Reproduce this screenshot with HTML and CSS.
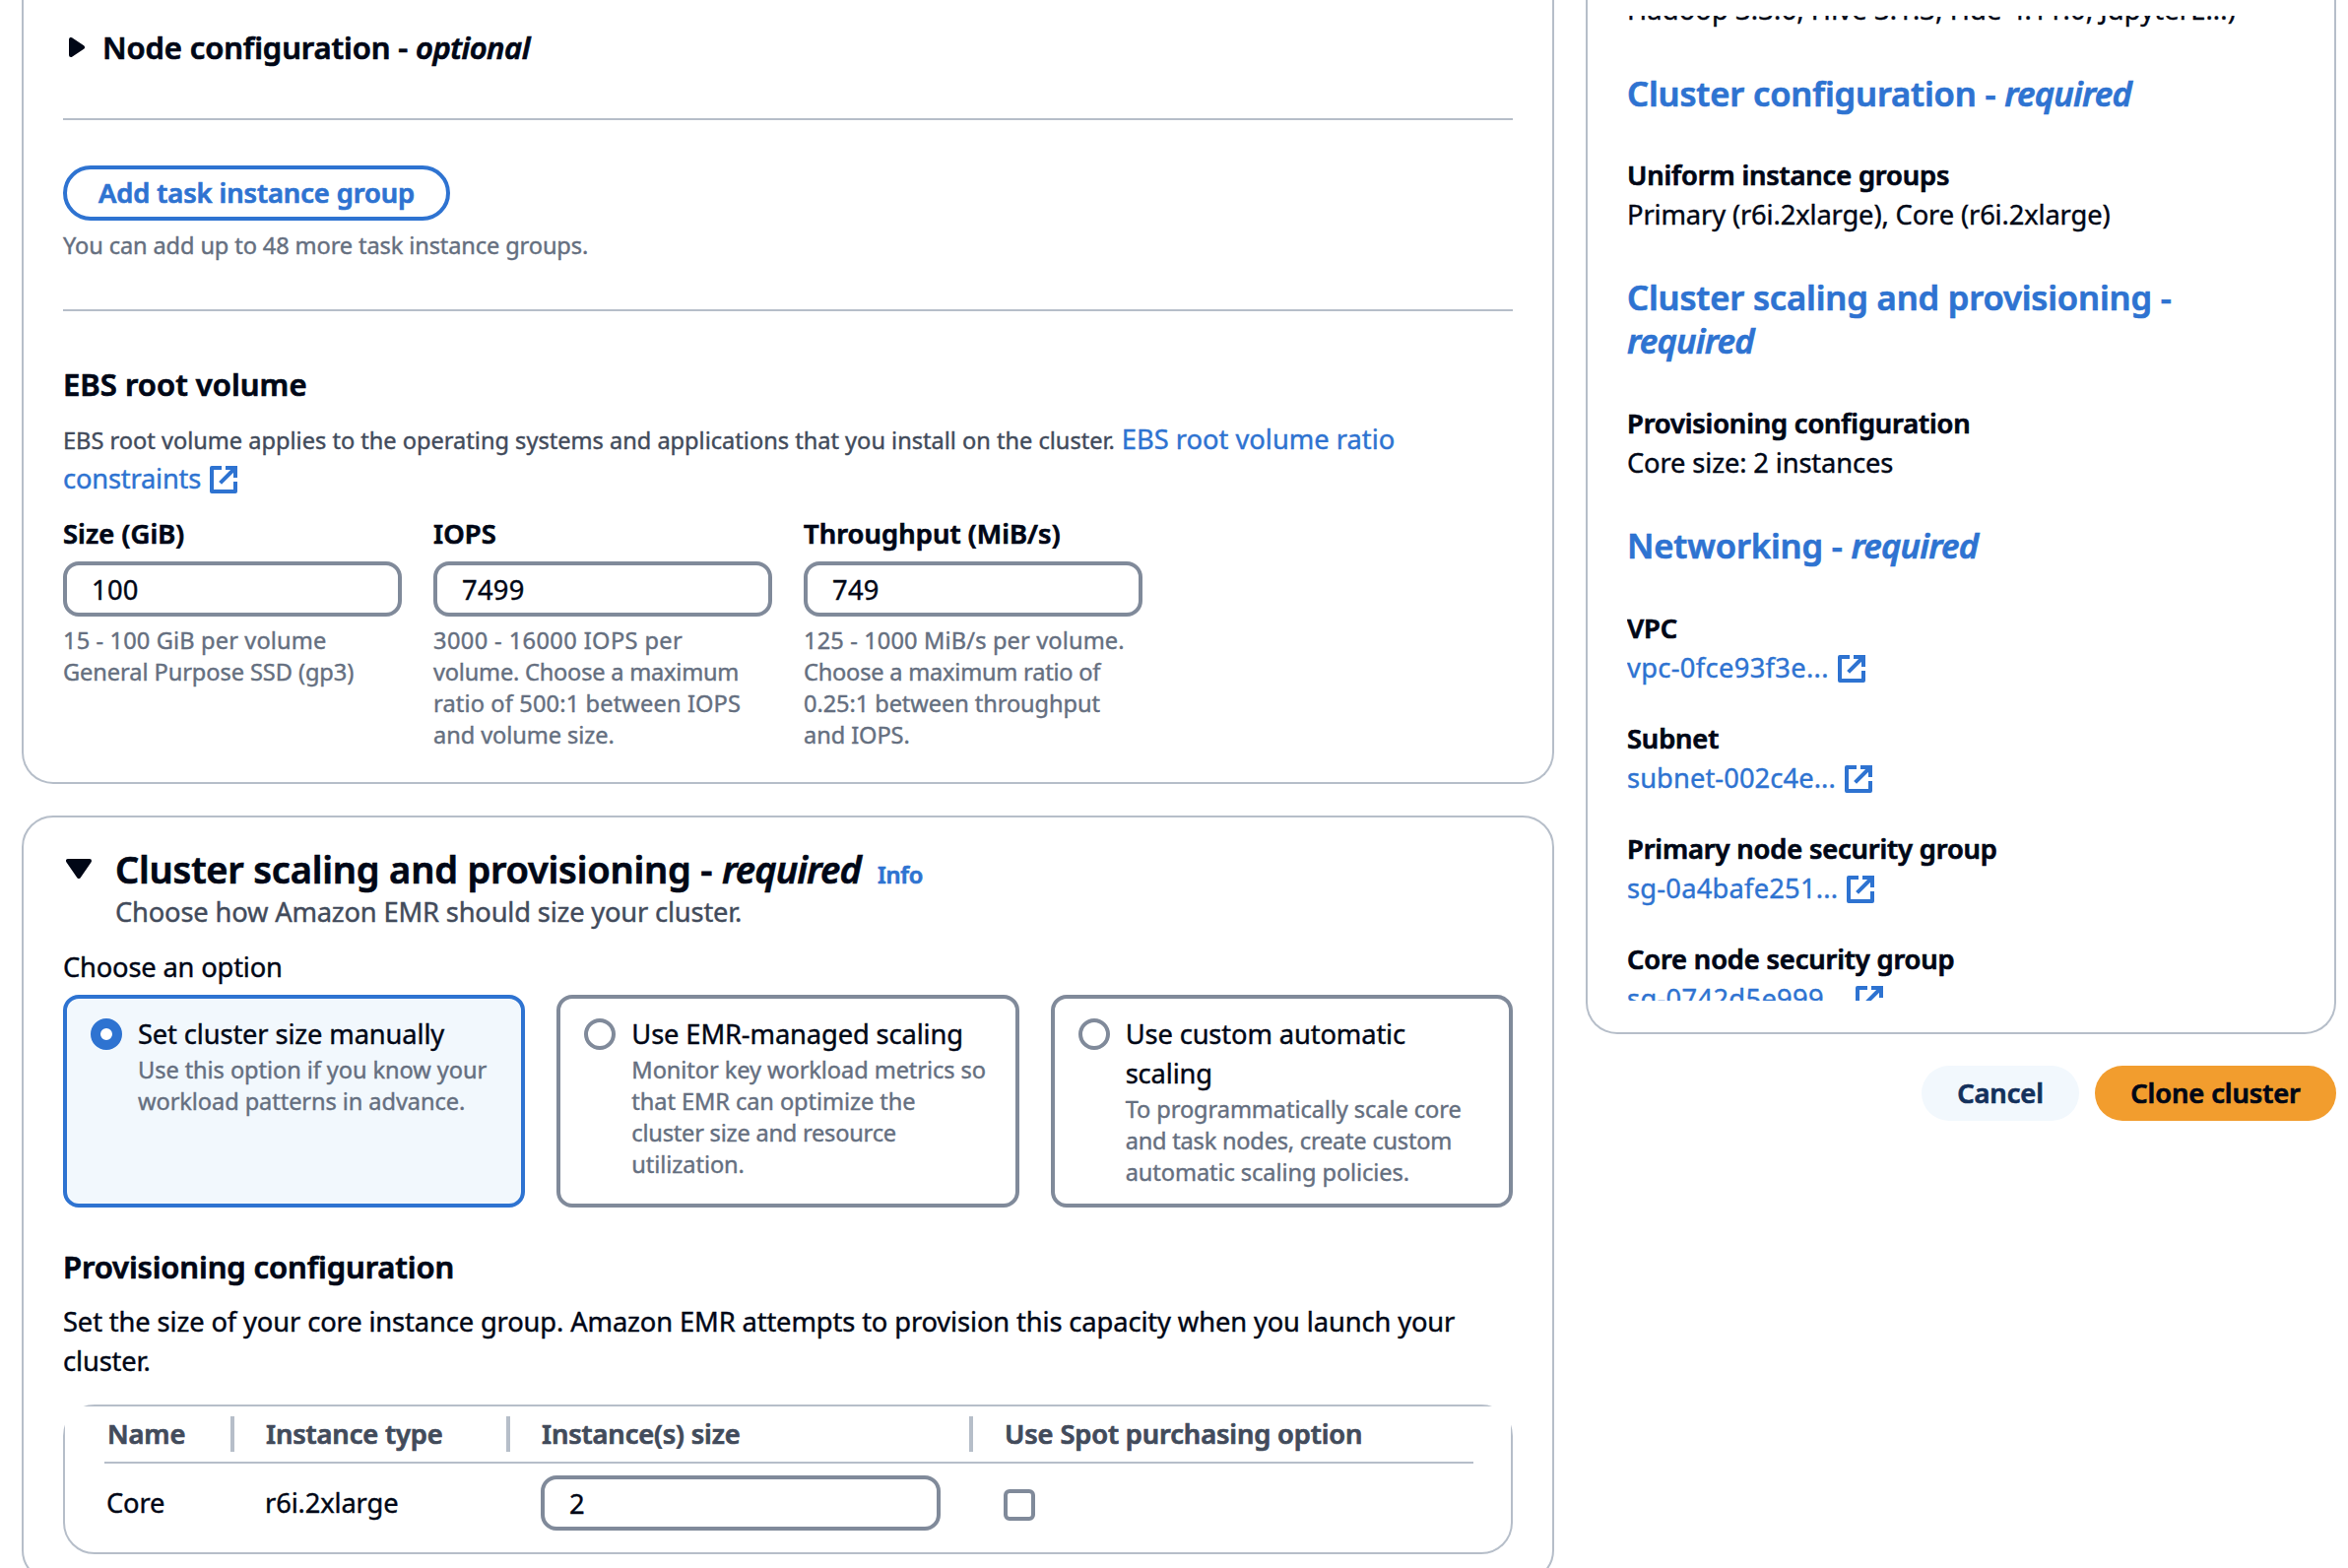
FILE: index.html
```
<!DOCTYPE html>
<html lang="en">
<head>
<meta charset="utf-8">
<title>Clone cluster</title>
<link rel="stylesheet" href="styles.css">
</head>
<body>
<svg class="defs" aria-hidden="true">
  <symbol id="external" viewBox="0 0 16 16"><g fill="none" stroke="currentColor" stroke-width="2" stroke-linejoin="round"><path d="M7 2H2v12h12V9"/><path stroke-linejoin="miter" d="M9 2h5v5M6.3 9.7L14 2"/></g></symbol>
</svg>
<div class="page">
  <main class="main">
    <section class="card card-top">
      <h3 class="h3 expander">
        <svg class="caret-right" viewBox="0 0 16 20"><path d="M2 2v16l12-8z"/></svg>
        <span>Node configuration - <em>optional</em></span>
      </h3>
      <hr class="rule rule-first">
      <button class="btn btn-outline" type="button">Add task instance group</button>
      <p class="hint add-hint">You can add up to 48 more task instance groups.</p>
      <hr class="rule rule-second">
      <h3 class="h3 ebs-title">EBS root volume</h3>
      <p class="ebs-text"><small>EBS root volume applies to the operating systems and applications that you install on the cluster.</small> <a class="link wide">EBS root volume ratio<br><span class="tight">constraints</span><svg class="ext"><use href="#external"/></svg></a></p>
      <div class="fields">
        <div class="field">
          <label class="label">Size (GiB)</label>
          <div class="input">100</div>
          <p class="hint"><span class="range">15 - 100 GiB per volume</span><br>General Purpose SSD (gp3)</p>
        </div>
        <div class="field">
          <label class="label">IOPS</label>
          <div class="input">7499</div>
          <p class="hint"><span class="range range-wide">3000 - 16000 IOPS per</span><br><span class="snug">volume. Choose a maximum</span><br><span class="range">ratio of 500:1 between IOPS</span><br>and volume size.</p>
        </div>
        <div class="field">
          <label class="label">Throughput (MiB/s)</label>
          <div class="input">749</div>
          <p class="hint"><span class="range">125 - 1000 MiB/s per volume.</span><br><span class="snug">Choose a maximum ratio of</span><br>0.25:1 between throughput<br>and IOPS.</p>
        </div>
      </div>
    </section>

    <section class="card card-scaling">
      <header class="section-head">
        <svg class="caret-down" viewBox="0 0 26 20"><path d="M2 2h22L13 18z"/></svg>
        <div>
          <h2 class="h2">Cluster scaling and provisioning - <em>required</em><a class="info">Info</a></h2>
          <p class="section-desc">Choose how Amazon EMR should size your cluster.</p>
        </div>
      </header>
      <p class="choose">Choose an option</p>
      <div class="tiles">
        <div class="tile selected">
          <span class="radio"></span>
          <div><p class="tile-title">Set cluster size manually</p><p class="hint">Use this option if you know your<br>workload patterns in advance.</p></div>
        </div>
        <div class="tile">
          <span class="radio"></span>
          <div><p class="tile-title">Use EMR-managed scaling</p><p class="hint">Monitor key workload metrics so<br>that EMR can optimize the<br><span class="snug">cluster size and resource</span><br>utilization.</p></div>
        </div>
        <div class="tile">
          <span class="radio"></span>
          <div><p class="tile-title">Use custom automatic<br>scaling</p><p class="hint">To programmatically scale core<br><span class="snug">and task nodes, create custom</span><br>automatic scaling policies.</p></div>
        </div>
      </div>
      <h3 class="h3 prov-title">Provisioning configuration</h3>
      <p class="prov-text">Set the size of your core instance group. Amazon EMR attempts to provision this capacity when you launch your<br>cluster.</p>
      <div class="table-box">
        <div class="table-inner">
          <div class="row head">
            <div class="cell">Name</div>
            <div class="cell">Instance type</div>
            <div class="cell">Instance(s) size</div>
            <div class="cell">Use Spot purchasing option</div>
          </div>
          <div class="row">
            <div class="cell">Core</div>
            <div class="cell">r6i.2xlarge</div>
            <div class="cell"><div class="input size-input">2</div></div>
            <div class="cell"><span class="checkbox"></span></div>
          </div>
        </div>
      </div>
    </section>
  </main>

  <aside class="side">
    <div class="card summary">
      <div class="summary-scroll">
        <p class="apps">Hadoop 3.3.6, Hive 3.1.3, Hue 4.11.0, JupyterE...)</p>
        <h3 class="sh">Cluster configuration - <em>required</em></h3>
        <dl><dt>Uniform instance groups</dt><dd>Primary (r6i.2xlarge), Core (r6i.2xlarge)</dd></dl>
        <h3 class="sh">Cluster scaling and provisioning -<br><em>required</em></h3>
        <dl><dt>Provisioning configuration</dt><dd>Core size: 2 instances</dd></dl>
        <h3 class="sh">Networking - <em>required</em></h3>
        <dl class="net">
          <div><dt>VPC</dt><dd><a class="link id">vpc-0fce93f3e...<svg class="ext"><use href="#external"/></svg></a></dd></div>
          <div><dt>Subnet</dt><dd><a class="link id">subnet-002c4e...<svg class="ext"><use href="#external"/></svg></a></dd></div>
          <div><dt>Primary node security group</dt><dd><a class="link id">sg-0a4bafe251...<svg class="ext"><use href="#external"/></svg></a></dd></div>
          <div><dt>Core node security group</dt><dd><a class="link id">sg-0742d5e999...<svg class="ext"><use href="#external"/></svg></a></dd></div>
        </dl>
      </div>
    </div>
    <div class="actions">
      <button class="btn btn-cancel" type="button">Cancel</button>
      <button class="btn btn-primary" type="button">Clone cluster</button>
    </div>
  </aside>
</div>
</body>
</html>
```
FILE: styles.css
```
* { box-sizing: border-box; margin: 0; padding: 0; }

body {
  width: 2384px;
  height: 1592px;
  overflow: hidden;
  background: #fff;
  color: #000716;
  font: 400 27.3px/40px "Noto Sans", "Open Sans", sans-serif;
  letter-spacing: -0.13px;
  white-space: nowrap;
  -webkit-text-stroke: 0.4px;
}

.defs { display: none; }

.page { display: flex; gap: 32px; height: 1592px; padding-left: 22px; overflow: hidden; }
.main { width: 1556px; display: flex; flex-direction: column; gap: 32px; }
.side { width: 762px; }

.card { flex: none; border: 2px solid #b6bec9; border-radius: 32px; background: #fff; }
.card-top { height: 796px; padding: 28px 40px 0; border-top: 0; border-radius: 0 0 32px 32px; }
.card-scaling { height: 778px; padding: 28px 40px 0; }

.h2, .h3, .sh, .btn, .label, .head, dt { -webkit-text-stroke: 0.7px; }
.h3 { font-size: 31px; font-weight: 600; line-height: 40px; letter-spacing: -0.12px; }
.h3 em { letter-spacing: -0.5px; }
.ebs-title { letter-spacing: 0.03px; }
.expander { display: flex; align-items: center; padding-left: 6px; }
.caret-right { width: 16px; height: 20px; margin-right: 18px; }
.caret-right path, .caret-down path { fill: #000716; stroke: #000716; stroke-width: 4; stroke-linejoin: round; }

.rule { height: 2px; border: 0; background: #b6bec9; }
.rule-first { margin: 52px 0 46px; }
.rule-second { margin: 49px 0 54px; }

.btn {
  height: 56px;
  border: 0;
  border-radius: 28px;
  padding: 0;
  font: 600 27.3px/40px "Noto Sans", "Open Sans", sans-serif;
  letter-spacing: -0.08px;
  text-align: center;
}
.btn-outline { display: block; width: 393px; border: 4px solid #2e73d1; background: #fff; color: #2e73d1; }
.btn-cancel { width: 160px; background: #f2f8fd; color: #13315c; }
.btn-primary { width: 245px; background: #f29d2e; color: #000716; }

.hint { font-size: 23.6px; line-height: 32px; color: #656f80; letter-spacing: -0.08px; }
.add-hint { margin-top: 9px; letter-spacing: -0.12px; }
.range { letter-spacing: 0.14px; }
.range-wide { letter-spacing: 0.4px; }
.snug { letter-spacing: -0.22px; }
.ebs-text { margin-top: 16px; }
.ebs-text small { font-size: 23.6px; line-height: 0; color: #424b5b; letter-spacing: -0.01px; }

.link { color: #2e73d1; }
.wide { letter-spacing: 0; }
.tight { letter-spacing: -0.2px; }
.id { letter-spacing: 0.22px; }
.ext { width: 32px; height: 32px; margin-left: 7px; vertical-align: -7px; }

.fields { display: flex; gap: 32px; margin-top: 16px; }
.field { width: 344px; }
.label { display: block; font-weight: 600; letter-spacing: 0.1px; }
.input { height: 56px; margin: 8px 0; padding: 5px 25px; border: 4px solid #808a9a; border-radius: 16px; letter-spacing: 0.3px; }

.section-head { display: flex; padding-left: 3px; }
.caret-down { width: 26px; height: 20px; margin: 14px 24px 0 0; }
.h2 { height: 48px; font-size: 38px; font-weight: 600; line-height: 49px; letter-spacing: -0.21px; }
.h2 em { letter-spacing: -0.95px; }
.info { margin-left: 17px; font-size: 23.6px; line-height: 0; color: #2e73d1; }
.section-desc { color: #424b5b; letter-spacing: -0.18px; }
.choose { margin-top: 16px; letter-spacing: -0.18px; }

.tiles { display: grid; grid-template-columns: repeat(3, 1fr); gap: 32px; margin-top: 8px; }
.tile { display: flex; height: 216px; padding: 16px 24px; border: 4px solid #808a9a; border-radius: 16px; }
.tile.selected { border-color: #2e73d1; background: #f2f8fd; }
.radio { flex: none; width: 32px; height: 32px; margin: 4px 16px 0 0; border: 4px solid #808a9a; border-radius: 50%; background: #fff; }
.selected .radio { border: 10px solid #2e73d1; }

.prov-title { margin-top: 40px; }
.prov-text { margin-top: 16px; letter-spacing: -0.12px; }

.table-box { height: 152px; margin-top: 24px; border: 2px solid #b6bec9; border-radius: 32px; }
.table-inner { height: 30px; padding: 0 38px 0 40px; background: #fff; }
.row { display: grid; grid-template-columns: 132px 280px 470px 508px; align-items: center; height: 80px; }
.head { height: 58px; border-bottom: 2px solid #b6bec9; font-weight: 600; color: #424b5b; }
.cell { padding-left: 31px; }
.cell:first-child { padding-left: 2px; }
.head .cell { height: 36px; padding-left: 32px; line-height: 36px; border-right: 4px solid #b6bec9; }
.head .cell:first-child { padding-left: 3px; }
.head .cell:last-child { border-right: 0; }
.size-input { width: 406px; margin: 0; }
.checkbox { display: block; width: 32px; height: 32px; margin: 4px 0 0; border: 4px solid #808a9a; border-radius: 6px; }

.summary { height: 1050px; padding: 16px 40px 32px; border-top: 0; border-radius: 0 0 32px 32px; }
.summary-scroll { height: 1000px; overflow: hidden; }
.apps { margin-top: -26px; letter-spacing: 0.12px; }
.sh { margin-top: 42px; font-size: 34.6px; font-weight: 600; line-height: 44px; letter-spacing: -0.16px; color: #2e73d1; }
.apps + .sh { margin-top: 43px; }
.sh em { letter-spacing: -0.8px; }
.summary dl { margin-top: 42px; }
.apps + .sh + dl { margin-top: 41px; }
.summary dt { font-weight: 600; letter-spacing: -0.15px; }
.net { display: grid; gap: 32px; }
.net div:first-child .id { letter-spacing: 0.33px; }
.net div:nth-child(2) .id { letter-spacing: 0.08px; }
.net div:last-child .id { letter-spacing: 0.32px; }

.actions { display: flex; justify-content: flex-end; gap: 16px; margin-top: 32px; }
```
